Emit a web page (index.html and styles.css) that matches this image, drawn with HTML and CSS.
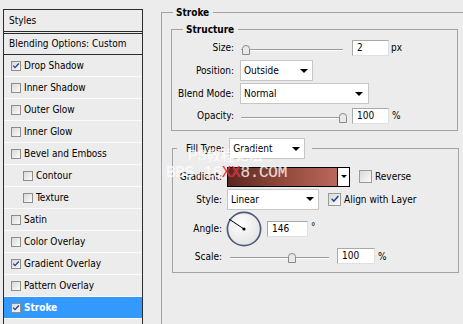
FILE: index.html
```html
<!DOCTYPE html>
<html>
<head>
<meta charset="utf-8">
<title>Layer Style - Stroke</title>
<link rel="stylesheet" href="styles.css">
</head>
<body>
<div class="styles-panel">
  <div class="sp-head">Styles</div>
  <div class="sp-blend">Blending Options: Custom</div>
  <ul class="sp-list">
    <li class="sp-item"><span class="cb"><svg viewBox="0 0 10 10" width="8" height="8"><path d="M1.5 4.5 L3.8 7 L8.5 1.8" fill="none" stroke="#233f97" stroke-width="1.7"/></svg></span>Drop Shadow</li>
    <li class="sp-item"><span class="cb"></span>Inner Shadow</li>
    <li class="sp-item"><span class="cb"></span>Outer Glow</li>
    <li class="sp-item"><span class="cb"></span>Inner Glow</li>
    <li class="sp-item"><span class="cb"></span>Bevel and Emboss</li>
    <li class="sp-item sub"><span class="cb"></span>Contour</li>
    <li class="sp-item sub"><span class="cb"></span>Texture</li>
    <li class="sp-item"><span class="cb"></span>Satin</li>
    <li class="sp-item"><span class="cb"></span>Color Overlay</li>
    <li class="sp-item"><span class="cb"><svg viewBox="0 0 10 10" width="8" height="8"><path d="M1.5 4.5 L3.8 7 L8.5 1.8" fill="none" stroke="#233f97" stroke-width="1.7"/></svg></span>Gradient Overlay</li>
    <li class="sp-item"><span class="cb"></span>Pattern Overlay</li>
    <li class="sp-item selected"><span class="cb"><svg viewBox="0 0 10 10" width="8" height="8"><path d="M1.5 4.5 L3.8 7 L8.5 1.8" fill="none" stroke="#233f97" stroke-width="1.7"/></svg></span>Stroke</li>
  </ul>
</div>

<fieldset class="grp grp-stroke">
  <legend class="grp-title">Stroke</legend>

  <fieldset class="grp grp-structure">
    <legend class="grp-title">Structure</legend>
    <div class="form form-structure">
      <span class="lbl">Size:</span>
      <div class="ctl">
        <div class="slider slider-a"><span class="thumb thumb-size"><svg width="8" height="10" viewBox="0 0 8 10"><path d="M0.5 9.5 V3.5 Q0.5 0.5 4 0.5 Q7.5 0.5 7.5 3.5 V9.5 Z" fill="#e9e9e9" stroke="#8a8a8a"/></svg></span></div>
        <span class="num num-a">2</span><span class="unit">px</span>
      </div>

      <span class="lbl">Position:</span>
      <div class="ctl"><div class="sel sel-pos"><span>Outside</span><i class="arr"></i></div></div>

      <span class="lbl">Blend Mode:</span>
      <div class="ctl"><div class="sel sel-blend"><span>Normal</span><i class="arr"></i></div></div>

      <span class="lbl">Opacity:</span>
      <div class="ctl">
        <div class="slider slider-a"><span class="thumb thumb-op"><svg width="8" height="10" viewBox="0 0 8 10"><path d="M0.5 9.5 V3.5 Q0.5 0.5 4 0.5 Q7.5 0.5 7.5 3.5 V9.5 Z" fill="#e9e9e9" stroke="#8a8a8a"/></svg></span></div>
        <span class="num num-a">100</span><span class="unit unit-pct">%</span>
      </div>
    </div>
  </fieldset>

  <fieldset class="grp grp-fill">
    <legend class="fill-legend"><span>Fill Type:</span><div class="sel sel-fill"><span>Gradient</span><i class="arr"></i></div></legend>
    <div class="form form-fill">
      <span class="lbl">Gradient:</span>
      <div class="ctl">
        <div class="gradpick"><span class="swatch"></span><span class="gbtn"><i class="arr arr-sm"></i></span></div>
        <span class="cb lg cb-rev"></span><span class="cb-text">Reverse</span>
      </div>

      <span class="lbl">Style:</span>
      <div class="ctl">
        <div class="sel sel-style"><span>Linear</span><i class="arr"></i></div>
        <span class="cb lg cb-align"><svg viewBox="0 0 12 12" width="10" height="10"><path d="M2 5.8 L4.6 8.6 L10 2.4" fill="none" stroke="#233f97" stroke-width="1.9"/></svg></span><span class="cb-text">Align with Layer</span>
      </div>

      <span class="lbl">Angle:</span>
      <div class="ctl">
        <svg class="dial" width="36" height="36" viewBox="0 0 36 36">
          <defs><radialGradient id="dg" cx="0.4" cy="0.35" r="0.7"><stop offset="0" stop-color="#ffffff"/><stop offset="1" stop-color="#e2e2e2"/></radialGradient></defs>
          <circle cx="18" cy="18" r="16.6" fill="url(#dg)" stroke="#4f5b78" stroke-width="1.7"/>
          <line x1="18" y1="18" x2="3.2" y2="8.2" stroke="#000" stroke-width="1"/>
          <circle cx="18" cy="18" r="1.6" fill="#000"/>
        </svg>
        <span class="num num-angle">146</span><span class="deg">°</span>
      </div>

      <span class="lbl">Scale:</span>
      <div class="ctl">
        <div class="slider slider-scale"><span class="thumb thumb-scale"><svg width="8" height="10" viewBox="0 0 8 10"><path d="M0.5 9.5 V3.5 Q0.5 0.5 4 0.5 Q7.5 0.5 7.5 3.5 V9.5 Z" fill="#e9e9e9" stroke="#8a8a8a"/></svg></span></div>
        <span class="num num-scale">100</span><span class="unit unit-pct">%</span>
      </div>
    </div>
  </fieldset>
</fieldset>

<div class="watermark">
  <div class="wm-1">PS教程论坛</div>
  <div class="wm-2">BBS.16<span class="red">XX</span>8.COM</div>
</div>
</body>
</html>
```

FILE: styles.css
```css
* { box-sizing: border-box; }
html, body { margin: 0; padding: 0; }
body {
  width: 463px;
  height: 324px;
  overflow: hidden;
  position: relative;
  background: #ececec;
  color: #000;
  font-family: "DejaVu Sans Condensed", "DejaVu Sans", sans-serif;
  font-stretch: condensed;
  font-size: 10px;
  display: flex;
  align-items: flex-start;
}

/* ---------- left styles list ---------- */
.styles-panel {
  flex: none;
  margin: 9px 0 0 3px;
  width: 140px;
  height: 315px;
  border: 1px solid #2c2c2c;
  border-bottom: none;
}
.sp-head {
  height: 24px;
  line-height: 21px;
  padding-left: 5px;
  border-bottom: 3px double #2c2c2c;
}
.sp-blend {
  height: 21px;
  line-height: 20px;
  padding-left: 5px;
  border-bottom: 1px solid #2c2c2c;
}
.sp-list { list-style: none; margin: 0; padding: 0; }
.sp-item {
  height: 22px;
  border-bottom: 1px solid #fbfbfb;
  display: flex;
  align-items: center;
  gap: 3px;
  padding-left: 7px;
}
.sp-item.sub { padding-left: 19px; }
.sp-item.selected { background: #3399ff; color: #fff; font-weight: bold; }

.cb {
  flex: none;
  width: 10px;
  height: 10px;
  border: 1px solid #8d8d8d;
  background: linear-gradient(135deg, #d9d9d4, #fbfbfb);
  display: flex;
  align-items: center;
  justify-content: center;
}
.cb.lg { width: 13px; height: 13px; border-color: #9a9a9a; }
.cb-rev { margin-left: 9px; }
.cb-align { margin-left: 9px; }
.cb-text { margin-left: 3px; }

/* ---------- group boxes ---------- */
.grp {
  margin: 0;
  padding: 0;
  border: 1px solid #a3a3a3;
  min-width: 0;
}
.grp-title {
  font-weight: bold;
  line-height: 13px;
  padding: 0 4px 0 3px;
  margin-left: 11px;
}
.grp-stroke {
  flex: none;
  margin: 6px 0 0 18px;
  width: 302px;
  height: 318px;
  border-right: none;
  border-bottom: none;
}
.grp-structure {
  margin: 4px 0 0 9px;
  width: 287px;
  padding: 0 0 4px;
}
.grp-fill {
  margin: 7px 0 0 10px;
  width: 287px;
  padding: 6px 0 7px;
}
.fill-legend {
  display: flex;
  align-items: center;
  gap: 5px;
  height: 21px;
  margin-left: 4px;
  padding: 0 7px 0 9px;
}

/* ---------- forms ---------- */
.form { display: grid; align-items: center; }
.form-structure {
  grid-template-columns: 62px 1fr;
  column-gap: 6px;
  grid-template-rows: 23px 23px 23px 21px;
}
.form-fill {
  grid-template-columns: 49px 1fr;
  column-gap: 5px;
  grid-template-rows: 23px 22px 37px 18px;
}
.lbl { text-align: right; white-space: nowrap; }
.ctl { display: flex; align-items: center; white-space: nowrap; }

.slider {
  flex: none;
  height: 10px;
  margin-top: 4px;
  display: flex;
  background:
    linear-gradient(#9c9c9c, #9c9c9c) 0 4px / 100% 1px no-repeat,
    linear-gradient(#ffffff, #ffffff) 0 5px / 100% 1px no-repeat;
}
.slider-a { width: 102px; margin-left: 1px; }
.slider-scale { width: 99px; margin-left: 3px; }
.thumb { display: block; width: 8px; height: 10px; flex: none; }
.thumb svg { display: block; }
.thumb-size { margin-left: 1px; }
.thumb-op { margin-left: 98px; }
.thumb-scale { margin-left: 58px; }

.num {
  flex: none;
  display: block;
  height: 16px;
  line-height: 14px;
  background: #fff;
  border: 1px solid;
  border-color: #a9a9a9 #e0e0e0 #e0e0e0 #a9a9a9;
  padding-left: 4px;
}
.num-a { width: 37px; margin-left: 9px; }
.num-angle { width: 41px; margin-left: 5px; }
.num-scale { width: 38px; margin-left: 8px; }
.unit { margin-left: 2px; }
.unit-pct { margin-left: 3px; }
.deg { margin-left: 3px; margin-top: -4px; }

.sel {
  flex: none;
  height: 21px;
  background: #fff;
  border: 1px solid #c6c6c6;
  display: flex;
  align-items: center;
  justify-content: space-between;
  padding: 0 4px 0 3px;
}
.sel-pos { width: 73px; }
.sel-blend { width: 129px; padding-right: 5px; }
.sel-fill { width: 76px; font-weight: normal; }
.sel-style { width: 92px; }
.arr {
  display: block;
  width: 0;
  height: 0;
  border-left: 4px solid transparent;
  border-right: 4px solid transparent;
  border-top: 4px solid #000;
}
.arr-sm { border-left-width: 3px; border-right-width: 3px; border-top-width: 3px; }

.gradpick {
  flex: none;
  display: flex;
  width: 123px;
  height: 20px;
  border: 1px solid #000;
}
.swatch {
  flex: 1;
  background: linear-gradient(to right, #5a261f, #8c4638 45%, #b9685a);
  border-right: 1px solid #000;
}
.gbtn {
  width: 11px;
  background: #fff;
  display: flex;
  align-items: center;
  justify-content: center;
}
.dial { display: block; flex: none; margin-left: -1px; }

/* ---------- watermark overlay ---------- */
.watermark {
  position: absolute;
  left: 166px;
  top: 147px;
  color: rgba(255, 255, 255, 0.72);
  text-shadow: 0 0 1px rgba(255, 255, 255, 0.4);
  font-family: "Liberation Mono", monospace;
  pointer-events: none;
}
.wm-1 {
  font-family: "Liberation Sans", "Noto Sans CJK SC", sans-serif;
  font-size: 14px;
  line-height: 16px;
  margin-left: 22px;
}
.wm-2 { font-size: 16px; line-height: 20px; letter-spacing: -0.3px; }
.wm-2 .red { color: rgba(230, 20, 40, 0.9); }
```
